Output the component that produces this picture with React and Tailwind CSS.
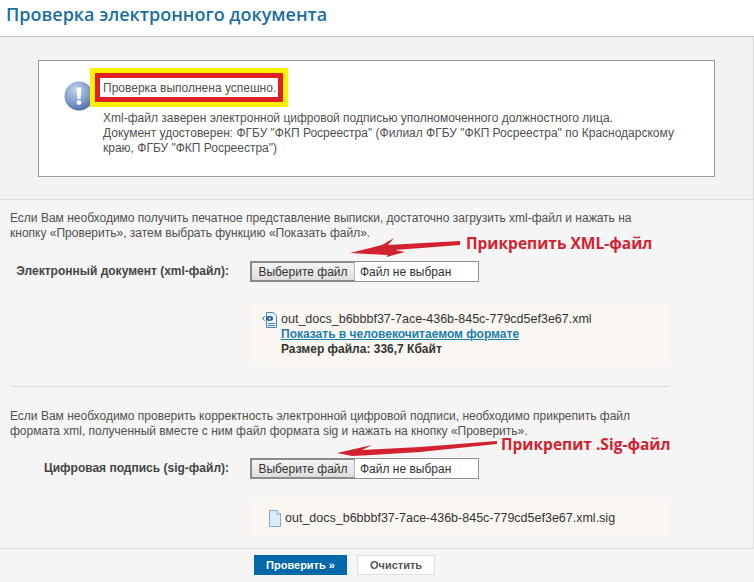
import React from "react";

const sans = "font-['Liberation_Sans',Arial,sans-serif]";
const note = "absolute font-['Open_Sans',sans-serif] font-bold text-[15.5px] leading-[20px] text-[#d3222f] whitespace-nowrap";

function InfoIcon() {
  return (
    <svg width="30" height="30" viewBox="0 0 30 30" className="shrink-0">
      <defs>
        <radialGradient id="ig" cx="0.4" cy="0.3" r="0.8">
          <stop offset="0" stopColor="#c6d4ea" />
          <stop offset="0.55" stopColor="#7f9dcc" />
          <stop offset="1" stopColor="#3f5f9f" />
        </radialGradient>
      </defs>
      <circle cx="15" cy="15" r="14.5" fill="url(#ig)" />
      <path d="M12.4 6.5h5.2l-1.2 11.5h-2.8z" fill="#fff" />
      <circle cx="15" cy="21.6" r="2.4" fill="#fff" />
    </svg>
  );
}

function XmlIcon() {
  return (
    <svg width="16" height="16" viewBox="0 0 16 16" className="shrink-0">
      <path d="M4.5 .5h7l3 3v12h-10z" fill="#eaf3fb" stroke="#4d86bd" />
      <path d="M6 11.5h7M6 13.5h7" stroke="#4d86bd" />
      <ellipse cx="7.5" cy="6.5" rx="3.6" ry="2.4" fill="#2a5f97" />
      <circle cx="7.5" cy="6.5" r="1.1" fill="#fff" />
      <path d="M2.6 4.5L.5 6.5l2.1 2" fill="none" stroke="#2a5f97" />
    </svg>
  );
}

function SigIcon() {
  return (
    <svg width="12" height="17" viewBox="0 0 12 17" className="shrink-0">
      <path d="M.5 .5h7.5l3.5 3.5v12.5h-11z" fill="#dcecf9" stroke="#7fa8cc" />
      <path d="M8 .5v3.5h3.5" fill="#fff" stroke="#7fa8cc" />
    </svg>
  );
}

function FileInput({ className = "" }) {
  return (
    <div className={`flex w-[229px] h-[21px] bg-white border border-[#8f8f8f] text-[12px] text-[#333] ${className}`}>
      <div className="w-[105px] -ml-px -my-px flex items-center justify-center bg-gradient-to-b from-[#f4f4f4] to-[#dedede] border-2 border-[#8a8a8a] border-r border-r-[#b5b5b5]">
        Выберите файл
      </div>
      <div className="pl-[5px] flex items-center">Файл не выбран</div>
    </div>
  );
}

function Row({ label }) {
  return (
    <div className="flex items-center">
      <div className="w-[229px] text-right font-bold text-[12px] leading-[15px] text-[#444]">{label}</div>
      <FileInput className="ml-[21px]" />
    </div>
  );
}

export default function App() {
  return (
    <div className={`relative w-[754px] h-[582px] overflow-hidden bg-[#f5f5f5] text-[12px] text-[#505050] ${sans}`}>
      <header className="h-[37px] bg-white border-b border-[#c4c4c4] pl-[6px] pt-[2px]">
        <h1 className="font-['Open_Sans',sans-serif] font-semibold text-[18px] leading-[24px] text-[#1b6f9f]">
          Проверка электронного документа
        </h1>
      </header>

      <section className="h-[163px] bg-[#f2f2f2] border-b border-[#dcdcdc] border-r border-r-[#d8d8d8] pt-[23px] pl-[38px]">
        <div className="w-[677px] h-[117px] bg-white border border-[#9a9a9a] pl-[25px] pt-[7px] flex">
          <div className="mt-[13px] -mr-[1px]"><InfoIcon /></div>
          <div className="-ml-[3px]">
            <div className="w-[198px] h-[39px] border-[5px] border-[#fff200] bg-[#e01f26] p-[5px]">
              <div className="h-[19px] bg-white flex items-center pl-[3px] pt-[1px] leading-[15px] whitespace-nowrap">
                Проверка выполнена успешно.
              </div>
            </div>
            <div className="w-[600px] ml-[13px] mt-[4px] leading-[15px]">
              Xml-файл заверен электронной цифровой подписью уполномоченного должностного лица.
              <br />
              Документ удостоверен: ФГБУ "ФКП Росреестра" (Филиал ФГБУ "ФКП Росреестра" по Краснодарскому
              <br />
              краю, ФГБУ "ФКП Росреестра")
            </div>
          </div>
        </div>
      </section>

      <section className="h-[348px] border-r border-[#e2e2e2] pt-[11px] pl-[10px] flex flex-col">
        <p className="leading-[15px] whitespace-nowrap">
          Если Вам необходимо получить печатное представление выписки, достаточно загрузить xml-файл и нажать на
          <br />
          кнопку «Проверить», затем выбрать функцию «Показать файл».
        </p>
        <div className="-ml-[10px] mt-[20px]"><Row label="Электронный документ (xml-файл):" /></div>
        <div className="ml-[240px] mt-[21px] w-[420px] h-[61px] bg-[#faf7f2] rounded-[2px] pl-[12px] pt-[9px] flex">
          <div><XmlIcon /></div>
          <div className="ml-[3px] leading-[15px] text-[12px] text-[#333]">
            <div className="text-[12.5px]">out_docs_b6bbbf37-7ace-436b-845c-779cd5ef3e67.xml</div>
            <div className="font-bold text-[#1c7fb0] underline">Показать в человекочитаемом формате</div>
            <div className="font-bold">Размер файла: 336,7 Кбайт</div>
          </div>
        </div>
        <div className="w-[659px] ml-px mt-[22px] h-px bg-[#dddddd]" />
        <p className="mt-[22px] leading-[15px] whitespace-nowrap">
          Если Вам необходимо проверить корректность электронной цифровой подписи, необходимо прикрепить файл
          <br />
          формата xml, полученный вместе с ним файл формата sig и нажать на кнопку «Проверить».
        </p>
        <div className="-ml-[10px] mt-[19px]"><Row label="Цифровая подпись (sig-файл):" /></div>
        <div className="ml-[240px] mt-[21px] w-[420px] h-[36px] bg-[#faf7f2] rounded-[2px] pl-[19px] flex items-center">
          <SigIcon />
          <div className="ml-[4px] text-[12.5px] text-[#333]">out_docs_b6bbbf37-7ace-436b-845c-779cd5ef3e67.xml.sig</div>
        </div>
      </section>

      <footer className="h-[34px] border-t border-[#dcdcdc] pl-[254px] pt-[6px] flex gap-[10px] items-start">
        <button className="w-[93px] h-[20px] bg-[#0069aa] text-white text-[11px] font-bold leading-none">
          Проверить »
        </button>
        <button className="w-[78px] h-[20px] bg-white border border-[#dedede] text-[#555] text-[11px] font-bold leading-none">
          Очистить
        </button>
      </footer>

      <svg width="754" height="582" className="absolute inset-0 pointer-events-none">
        <path d="M350 253 L382 245 L394 238 L388 245 L460 241 L460 245 L395 250 L405 252 L386 257 L388 255 L368 254 Z" fill="#d3222f" />
        <path d="M337 453 L372 445 L362 450 L420 447 L497 441 L497 444 L420 452 L372 455 L352 456 Z" fill="#d3222f" />
      </svg>
      <div className={`${note} left-[466px] top-[233px]`}>Прикрепить XML-файл</div>
      <div className={`${note} left-[501px] top-[434px]`}>Прикрепит .Sig-файл</div>
    </div>
  );
}
